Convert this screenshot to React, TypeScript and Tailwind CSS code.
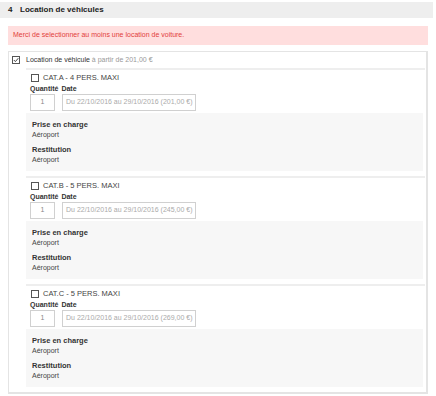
import React from "react";

const items = [
  { name: "CAT.A - 4 PERS. MAXI", price: "201,00 €" },
  { name: "CAT.B - 5 PERS. MAXI", price: "245,00 €" },
  { name: "CAT.C - 5 PERS. MAXI", price: "269,00 €" },
];

function Box({ checked }: { checked?: boolean }) {
  return (
    <span className="inline-flex w-[8px] h-[8px] border border-[#555] bg-white items-center justify-center shrink-0">
      {checked && (
        <svg width="6" height="6" viewBox="0 0 6 6">
          <path d="M0.8 3 L2.4 4.6 L5.3 1.2" fill="none" stroke="#444" strokeWidth="1" />
        </svg>
      )}
    </span>
  );
}

export default function App() {
  return (
    <div
      className="w-[436px] h-[396px] bg-white text-[#333] overflow-hidden"
      style={{ fontFamily: '"Liberation Sans", Arial, sans-serif' }}
    >
      <div className="mt-[2px] h-[16px] w-[433px] bg-[#eeeeee] flex items-center pl-[8px] text-[8px] font-bold text-[#222]">
        <span className="w-[12px]">4</span>
        <span>Location de véhicules</span>
      </div>
      <div className="mt-[8px] mx-[8px] h-[19px] bg-[#ffdede] text-[#e2403c] text-[7px] flex items-center pl-[5px]">
        Merci de selectionner au moins une location de voiture.
      </div>
      <div className="mt-[6px] mx-[8px] w-[420px] border border-[#e4e4e4] border-r-2 border-b-2 pb-[3px]">
        <div className="h-[16px] flex items-center pl-[3px] text-[7px]">
          <Box checked />
          <span className="ml-[6px] text-[#333]">Location de véhicule</span>
          <span className="ml-[2px] text-[#999]">à partir de 201,00 €</span>
        </div>
        <div className="ml-[17px] mr-[1px]">
          {items.map((it) => (
            <div key={it.name} className="border-t-2 border-[#eeeeee] pt-[1px] pb-[5px] last:pb-[2px]">
              <div className="h-[14px] flex items-center pl-[5px] text-[7.5px] text-[#444]">
                <Box />
                <span className="ml-[4px]">{it.name}</span>
              </div>
              <div className="h-[8px] flex items-center pl-[4px] text-[7px] font-bold text-[#333]">
                <span>Quantité</span>
                <span className="ml-[3px]">Date</span>
              </div>
              <div className="mt-[1px] h-[17px] flex pl-[4px] text-[7px]">
                <div className="w-[25px] h-full border border-[#d0d0d0] flex items-center justify-center text-[#888]">1</div>
                <div className="ml-[7px] w-[134px] h-full border border-[#d0d0d0] flex items-center pl-[3px] text-[#aaa]">
                  Du 22/10/2016 au 29/10/2016 ({it.price})
                </div>
              </div>
              <div className="mt-[2px] mr-[2px] bg-[#f7f7f7] pt-[6px] pb-[5px] pl-[6px] text-[7px]">
                <div className="h-[11px] flex items-center font-bold text-[#333] text-[7.5px]">Prise en charge</div>
                <div className="h-[11px] flex items-center text-[#444]">Aéroport</div>
                <div className="mt-[3px] h-[11px] flex items-center font-bold text-[#333] text-[7.5px]">Restitution</div>
                <div className="h-[11px] flex items-center text-[#444]">Aéroport</div>
              </div>
            </div>
          ))}
        </div>
      </div>
    </div>
  );
}
